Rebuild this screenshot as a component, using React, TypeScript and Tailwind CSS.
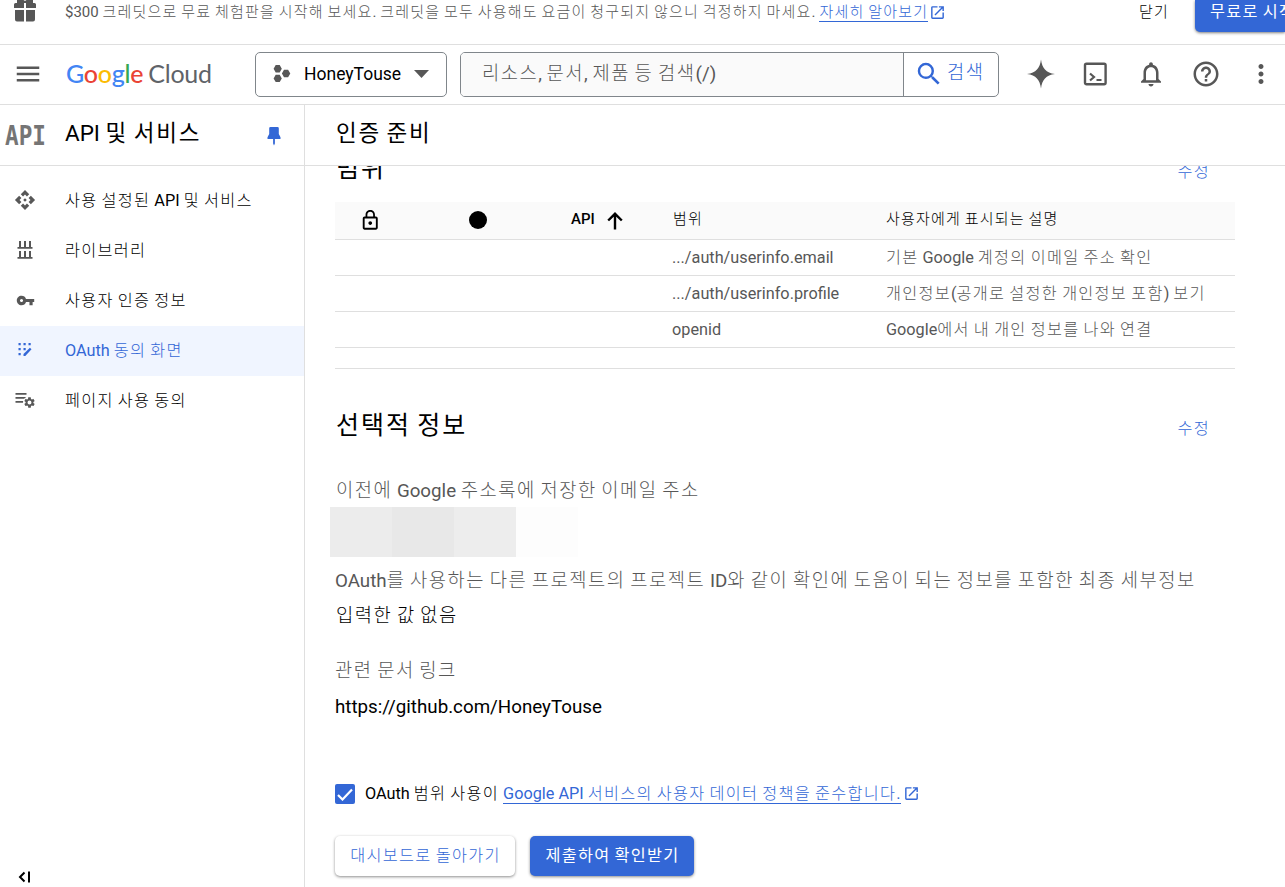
import React from 'react';
import clsx from 'clsx';
import {
  MdApi,
  MdHelpOutline,
  MdLockOutline,
  MdMenu,
  MdMoreVert,
  MdNotificationsNone,
  MdOpenInNew,
  MdSearch,
  MdSettings,
  MdVpnKey,
} from 'react-icons/md';

interface KoProps {
  children: string;
  strong?: boolean;
}

const Ko: React.FC<KoProps> = ({ children, strong }) => (
  <span>
    {children.split(/([가-힣]+)/).map((part, i) =>
      i % 2 ? (
        <span key={i} className={clsx('tracking-[0.08em]', strong ? 'font-normal' : 'font-light')}>
          {part}
        </span>
      ) : (
        part
      )
    )}
  </span>
);

const GiftIcon = () => (
  <svg width="24" height="26" viewBox="0 0 24 26" fill="#575757">
    <path d="M2.500 6h19A1.500 1.500 0 0 1 23 7.500V11H13V6h-2v5H1V7.500A1.500 1.500 0 0 1 2.500 6zM2 13h9v11.500H4a2 2 0 0 1-2-2zM13 13h9v9.500a2 2 0 0 1-2 2h-7z" />
    <path d="M4 6V2h5l3 2 3-2h5v4z" />
  </svg>
);

const ProjectIcon = () => (
  <svg width="18" height="20" viewBox="0 0 18 20" fill="#575757">
    <path d="M2.700 1h4l2.100 3.700-2.100 3.700h-4L.6 4.700zM2.700 10.700h4l2.100 3.700-2.100 3.700h-4L.6 14.400zM11 5.700h4.100l2.200 3.800-2.200 3.800H11L8.900 9.500z" />
  </svg>
);

const SparkIcon = () => (
  <svg width="28" height="30" viewBox="0 0 28 30" fill="#575757">
    <path d="M14 .5c1 8.500 5 13.500 14 14.500-9 1-13 6-14 14.500C13 21 9 16 0 15 9 14 13 9 14 .5z" />
  </svg>
);

const ShellIcon = () => (
  <svg width="24" height="24" viewBox="0 0 24 24" fill="none" stroke="#575757">
    <rect x="2" y="1.700" width="20.600" height="20.600" rx="1.500" strokeWidth="2.400" />
    <path d="M7 11.500l4 3.500-4 3.500M13.500 18h5" strokeWidth="2.200" />
  </svg>
);

const PinIcon = () => (
  <svg width="14" height="20" viewBox="0 0 14 20" fill="#3367d6">
    <path d="M3.500 1h7a1.300 1.300 0 0 1 1.300 1.300V8l1.700 3.300V13H7.900v4.500L7 19.500l-.9-2V13H.5v-1.700L2.200 8V2.300A1.300 1.300 0 0 1 3.500 1z" />
  </svg>
);

const LibraryIcon = () => (
  <svg width="16" height="18" viewBox="0 0 16 18" fill="#575757">
    <path d="M2 0h2v6h3V0h2v6h3V0h2v6h1.500v1.800H.5V6H2zM2 10h2v6h3v-6h2v6h3v-6h2v6h1.500v1.800H.5V16H2z" />
  </svg>
);

const ConsentIcon = () => (
  <svg width="14" height="14" viewBox="0 0 14 14" fill="#3367d6">
    <path d="M.5 0h2.200v2.200H.5zM5.500 0h2.200v2.200H5.500zM10.500 0h2.200v2.200h-2.200zM.5 5h2.200v2.200H.5zM5.500 5h2.200v2.200H5.500zM.5 10h2.200v2.200H.5z" />
    <path d="M5.500 13v-2l6.400-6.200 1.600 1.500L7.300 13z" />
  </svg>
);

const PageUsageIcon = () => (
  <span className="relative block h-4 w-5">
    <svg width="20" height="16" viewBox="0 0 20 16" fill="#575757">
      <path d="M.5 1h11v1.700H.5zM.5 5h11v1.700H.5zM.5 9h8v1.700H.5z" />
    </svg>
    <MdSettings className="absolute top-[4px] left-[8px] rounded-full bg-white" size={13} />
    <span className="absolute top-[9px] left-[13px] size-[3px] rounded-full bg-white" />
  </span>
);

const SortArrow = () => (
  <svg width="16" height="18" viewBox="0 0 16 18" fill="none" stroke="#000" strokeWidth="2.400">
    <path d="M8 17.500V2M1.200 8.500L8 1.800l6.800 6.700" />
  </svg>
);

const CollapseIcon = () => (
  <svg width="14" height="12" viewBox="0 0 14 12" fill="none" stroke="#000" strokeWidth="2">
    <path d="M7.500 1.500L3 6l4.500 4.500M12 .5v11" />
  </svg>
);

const menu = [
  { label: '사용 설정된 API 및 서비스', icon: <MdApi size={22} /> },
  { label: '라이브러리', icon: <LibraryIcon /> },
  { label: '사용자 인증 정보', icon: <MdVpnKey size={19} /> },
  { label: 'OAuth 동의 화면', icon: <ConsentIcon />, active: true },
  { label: '페이지 사용 동의', icon: <PageUsageIcon /> },
];

const scopes = [
  { scope: '.../auth/userinfo.email', desc: '기본 Google 계정의 이메일 주소 확인' },
  { scope: '.../auth/userinfo.profile', desc: '개인정보(공개로 설정한 개인정보 포함) 보기' },
  { scope: 'openid', desc: 'Google에서 내 개인 정보를 나와 연결' },
];

const Banner = () => (
  <div className="flex h-[45px] shrink-0 items-start border-b border-[#dfdfdf] text-[15px] leading-6">
    <div className="-mt-[3px] ml-[13px] w-[52px]">
      <GiftIcon />
    </div>
    <p className="flex text-[#575757]">
      <span className="mr-1">
        <Ko>$300 크레딧으로 무료 체험판을 시작해 보세요. 크레딧을 모두 사용해도 요금이 청구되지 않으니 걱정하지 마세요.</Ko>
      </span>
      <a className="h-[22px] border-b border-[#3367d6] text-[#3367d6]">
        <Ko>자세히 알아보기</Ko>
      </a>
      <MdOpenInNew className="mt-1 ml-px text-[#3367d6]" size={17} />
    </p>
    <button className="ml-auto text-black">
      <Ko>닫기</Ko>
    </button>
    <button className="ml-[26px] h-8 w-[90px] overflow-hidden rounded-bl-[5px] bg-[#3367d6] pb-2 pl-[15px] text-left text-[16.25px] whitespace-nowrap text-white shadow-[0_1px_3px_rgba(0,0,0,0.5)]">
      <Ko strong>무료로 시작하기</Ko>
    </button>
  </div>
);

const Header = () => (
  <header className="flex h-[60px] shrink-0 items-center border-b border-[#dfdfdf] text-[#575757]">
    <MdMenu className="mb-0.5 ml-[13px]" size={30} />
    <div className="mb-0.5 ml-[23px] w-[146px] font-[Lato] text-[25px] leading-none tracking-[-0.25px] whitespace-nowrap text-[#5f6368]">
      <span className="font-medium">
        <span className="text-[#4285f4]">G</span>
        <span className="text-[#ea4335]">o</span>
        <span className="text-[#fbbc04]">o</span>
        <span className="text-[#4285f4]">g</span>
        <span className="text-[#34a853]">l</span>
        <span className="text-[#ea4335]">e</span>
      </span>
      <span className="ml-[5px]">Cloud</span>
    </div>
    <button className="ml-[43px] flex h-[45px] w-[192px] items-center rounded-[5px] border border-[#80868b] pl-[17px] text-[17.5px] text-black">
      <span className="mb-0.5">
        <ProjectIcon />
      </span>
      <span className="ml-[13px]">HoneyTouse</span>
      <svg className="mb-0.5 ml-[13px]" width="15" height="8" viewBox="0 0 15 8" fill="#575757">
        <path d="M0 0h15L7.500 8z" />
      </svg>
    </button>
    <div className="ml-[13px] flex h-[45px] w-[539px] overflow-hidden rounded-[5px] border border-[#80868b] text-[18.75px]">
      <div className="flex w-[443px] items-center border-r border-[#80868b] bg-[#fafafa] pl-[21px]">
        <Ko>리소스, 문서, 제품 등 검색(/)</Ko>
      </div>
      <button className="flex flex-1 items-center pb-0.5 pl-2.5 text-[#3367d6]">
        <MdSearch size={30} />
        <span className="ml-[3px]">
          <Ko>검색</Ko>
        </span>
      </button>
    </div>
    <div className="ml-7 flex flex-1 items-center pb-0.5">
      <SparkIcon />
      <span className="ml-7">
        <ShellIcon />
      </span>
      <MdNotificationsNone className="ml-[29px]" size={30} />
      <MdHelpOutline className="ml-[25px]" size={30} />
      <MdMoreVert className="ml-[25px] shrink-0" size={30} />
    </div>
  </header>
);

const Sidebar = () => (
  <aside className="flex w-[305px] shrink-0 flex-col border-r border-[#dfdfdf]">
    <div className="flex h-[61px] items-center border-b border-[#dfdfdf]">
      <div className="w-[65px] pt-1 pl-[5px]">
        <span className="inline-block origin-left scale-x-[0.84] font-['DejaVu_Sans_Mono'] text-[27px] leading-none font-bold text-[#757575]">
          API
        </span>
      </div>
      <h2 className="pb-0.5 text-[22.5px]">
        <Ko strong>API 및 서비스</Ko>
      </h2>
      <span className="mt-0.5 mr-[23px] ml-auto">
        <PinIcon />
      </span>
    </div>
    <nav className="pt-2.5">
      {menu.map((item) => (
        <a
          key={item.label}
          className={clsx(
            'flex h-[50px] items-center text-[16.25px]',
            item.active ? 'bg-[#f0f5ff] text-[#3367d6]' : 'text-black'
          )}
        >
          <span className={clsx('mb-0.5 flex w-[51px] justify-center pr-px', !item.active && 'text-[#575757]')}>
            {item.icon}
          </span>
          <span className="ml-3.5">
            <Ko>{item.label}</Ko>
          </span>
        </a>
      ))}
    </nav>
    <div className="mt-auto mb-1 pl-[17px]">
      <CollapseIcon />
    </div>
  </aside>
);

const SectionTitle: React.FC<{ title: string }> = ({ title }) => (
  <div className="flex h-10 items-center justify-between">
    <h3 className="mt-px pl-px text-[25px] leading-10">
      <Ko strong>{title}</Ko>
    </h3>
    <a className="mt-2 mr-[25px] text-[16.25px] text-[#3367d6]">
      <Ko>수정</Ko>
    </a>
  </div>
);

const ScopeTable = () => (
  <div className="mt-3.5 text-[16.25px] text-[#575757]">
    <div className="flex h-[38px] items-center border-b border-[#dfdfdf] bg-[#fafafa] text-[15px] text-black">
      <div className="w-[134px] pl-6">
        <MdLockOutline size={22.5} />
      </div>
      <div className="mb-0.5 w-[102px]">
        <span className="block size-[18px] rounded-full bg-black" />
      </div>
      <div className="flex w-[102px] items-center">
        <span className="mb-0.5 font-medium">API</span>
        <span className="ml-3">
          <SortArrow />
        </span>
      </div>
      <div className="mb-[3px] w-[213px]">
        <Ko>범위</Ko>
      </div>
      <div className="mb-[3px]">
        <Ko>사용자에게 표시되는 설명</Ko>
      </div>
    </div>
    {scopes.map((row) => (
      <div key={row.scope} className="flex h-9 items-center border-b border-[#dfdfdf] pt-0.5 pl-[337px]">
        <div className="w-[213px]">{row.scope}</div>
        <div className="pl-px">
          <Ko>{row.desc}</Ko>
        </div>
      </div>
    ))}
  </div>
);

const App: React.FC = () => {
  return (
    <div className="flex h-[887px] w-[1285px] flex-col overflow-hidden bg-white font-[Roboto,'Noto_Sans_CJK_KR',sans-serif] text-black">
      <Banner />
      <Header />
      <div className="flex min-h-0 flex-1">
        <Sidebar />
        <main className="flex min-w-0 flex-1 flex-col">
          <div className="flex h-[61px] shrink-0 items-center border-b border-[#dfdfdf] pb-0.5 pl-[31px] text-[22.5px]">
            <Ko strong>인증 준비</Ko>
          </div>
          <div className="flex-1 overflow-hidden pl-[30px]">
            <div className="-mt-[18px] w-[900px]">
              <SectionTitle title="범위" />
              <ScopeTable />
              <div className="mt-5 mb-9 border-t border-[#dfdfdf]" />
              <SectionTitle title="선택적 정보" />
              <div className="mt-[31px] text-[18.75px] leading-[30px] whitespace-nowrap">
                <div className="pl-px text-[#575757]">
                  <Ko>이전에 Google 주소록에 저장한 이메일 주소</Ko>
                </div>
                <div className="mt-px -ml-[5px] flex h-[50px]">
                  <div className="w-[62px] bg-[#ececec]" />
                  <div className="w-[62px] bg-[#e8e8e8]" />
                  <div className="w-[62px] bg-[#ededed]" />
                  <div className="w-[62px] bg-[#fdfdfd]" />
                </div>
                <div className="mt-[9px] text-[#575757]">
                  <Ko>OAuth를 사용하는 다른 프로젝트의 프로젝트 ID와 같이 확인에 도움이 되는 정보를 포함한 최종 세부정보</Ko>
                </div>
                <div className="mt-[5px] pl-px">
                  <Ko>입력한 값 없음</Ko>
                </div>
                <div className="mt-[25px] text-[#575757]">
                  <Ko>관련 문서 링크</Ko>
                </div>
                <div className="mt-1.5">https://github.com/HoneyTouse</div>
              </div>
              <div className="mt-[62px] flex h-5 items-center text-[16.25px]">
                <span className="flex size-5 items-center justify-center rounded-[2px] bg-[#3367d6]">
                  <svg width="16" height="13" viewBox="0 0 16 13" fill="none" stroke="#fff" strokeWidth="2.200">
                    <path d="M1 7l4.500 4.500L15 1.500" />
                  </svg>
                </span>
                <span className="ml-2.5">
                  <Ko>OAuth 범위 사용이</Ko>
                </span>
                <a className="ml-1 border-b border-[#3367d6] leading-[18px] text-[#3367d6]">
                  <Ko>Google API 서비스의 사용자 데이터 정책을 준수합니다.</Ko>
                </a>
                <MdOpenInNew className="mb-0.5 ml-0.5 text-[#3367d6]" size={17} />
              </div>
              <div className="mt-8 flex gap-[15px] text-[16.25px]">
                <button className="h-10 w-[180px] rounded-[5px] pl-px text-[#3367d6] shadow-[0_1px_3px_rgba(0,0,0,0.45)]">
                  <Ko>대시보드로 돌아가기</Ko>
                </button>
                <button className="h-10 w-[164px] rounded-[5px] bg-[#3367d6] pl-px text-white shadow-[0_1px_3px_rgba(0,0,0,0.45)]">
                  <Ko strong>제출하여 확인받기</Ko>
                </button>
              </div>
            </div>
          </div>
        </main>
      </div>
    </div>
  );
};

export default App;
